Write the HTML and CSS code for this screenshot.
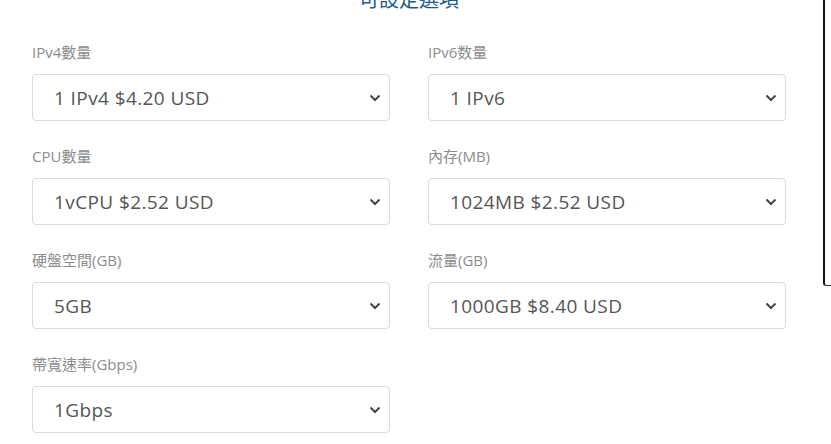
FILE: index.html
```html
<!DOCTYPE html>
<html lang="zh-Hant">
<head>
<meta charset="utf-8">
<title>可設定選項</title>
<link rel="stylesheet" href="styles.css">
</head>
<body>
<div class="side-frame"></div>
<main class="options">
  <h2 class="title">可設定選項</h2>
  <div class="grid">
    <div class="field">
      <label class="label">IPv4數量</label>
      <div class="select-wrap">
        <select class="select"><option>1 IPv4 $4.20 USD</option></select>
        <svg class="chev" width="12" height="8" viewBox="0 0 12 8"><path d="M1.5 1.5 L6 6 L10.5 1.5" fill="none" stroke="#444" stroke-width="2"/></svg>
      </div>
    </div>
    <div class="field">
      <label class="label">IPv6数量</label>
      <div class="select-wrap">
        <select class="select"><option>1 IPv6</option></select>
        <svg class="chev" width="12" height="8" viewBox="0 0 12 8"><path d="M1.5 1.5 L6 6 L10.5 1.5" fill="none" stroke="#444" stroke-width="2"/></svg>
      </div>
    </div>
    <div class="field">
      <label class="label">CPU數量</label>
      <div class="select-wrap">
        <select class="select"><option>1vCPU $2.52 USD</option></select>
        <svg class="chev" width="12" height="8" viewBox="0 0 12 8"><path d="M1.5 1.5 L6 6 L10.5 1.5" fill="none" stroke="#444" stroke-width="2"/></svg>
      </div>
    </div>
    <div class="field">
      <label class="label">內存(MB)</label>
      <div class="select-wrap">
        <select class="select"><option>1024MB $2.52 USD</option></select>
        <svg class="chev" width="12" height="8" viewBox="0 0 12 8"><path d="M1.5 1.5 L6 6 L10.5 1.5" fill="none" stroke="#444" stroke-width="2"/></svg>
      </div>
    </div>
    <div class="field">
      <label class="label">硬盤空間(GB)</label>
      <div class="select-wrap">
        <select class="select"><option>5GB</option></select>
        <svg class="chev" width="12" height="8" viewBox="0 0 12 8"><path d="M1.5 1.5 L6 6 L10.5 1.5" fill="none" stroke="#444" stroke-width="2"/></svg>
      </div>
    </div>
    <div class="field">
      <label class="label">流量(GB)</label>
      <div class="select-wrap">
        <select class="select"><option>1000GB $8.40 USD</option></select>
        <svg class="chev" width="12" height="8" viewBox="0 0 12 8"><path d="M1.5 1.5 L6 6 L10.5 1.5" fill="none" stroke="#444" stroke-width="2"/></svg>
      </div>
    </div>
    <div class="field">
      <label class="label">帶寬速率(Gbps)</label>
      <div class="select-wrap">
        <select class="select"><option>1Gbps</option></select>
        <svg class="chev" width="12" height="8" viewBox="0 0 12 8"><path d="M1.5 1.5 L6 6 L10.5 1.5" fill="none" stroke="#444" stroke-width="2"/></svg>
      </div>
    </div>
  </div>
</main>
</body>
</html>
```

FILE: styles.css
```css
html, body {
  margin: 0;
  padding: 0;
  background: #fff;
  overflow: hidden;
}
body {
  font-family: "Open Sans", "Noto Sans CJK TC", sans-serif;
  position: relative;
  height: 444px;
}
.options {
  width: 754px;
  padding-left: 32px;
}
.title {
  margin: -14px 0 27px;
  height: 28px;
  line-height: 28px;
  font-size: 20px;
  font-weight: 400;
  color: #1b5a8c;
  text-align: center;
}
.grid {
  display: grid;
  grid-template-columns: 358px 358px;
  column-gap: 38px;
  row-gap: 24px;
}
.label {
  display: block;
  font-size: 15px;
  line-height: 22px;
  color: #8c8c8c;
  margin-bottom: 11px;
}
.select-wrap {
  position: relative;
}
.select {
  display: block;
  width: 100%;
  height: 47px;
  box-sizing: border-box;
  -webkit-appearance: none;
  appearance: none;
  border: 1px solid #dadada;
  border-radius: 4px;
  background: #fff;
  padding: 0 40px 0 21px;
  font-family: "Open Sans", sans-serif;
  font-size: 19px;
  letter-spacing: 0.4px;
  color: #555;
  outline: none;
}
.chev {
  position: absolute;
  right: 9px;
  top: 20px;
  pointer-events: none;
}
.side-frame {
  position: absolute;
  left: 823px;
  top: -10px;
  width: 20px;
  height: 295px;
  border-left: 2px solid #111;
  border-bottom: 1px solid #333;
  border-bottom-left-radius: 3px;
}
```
